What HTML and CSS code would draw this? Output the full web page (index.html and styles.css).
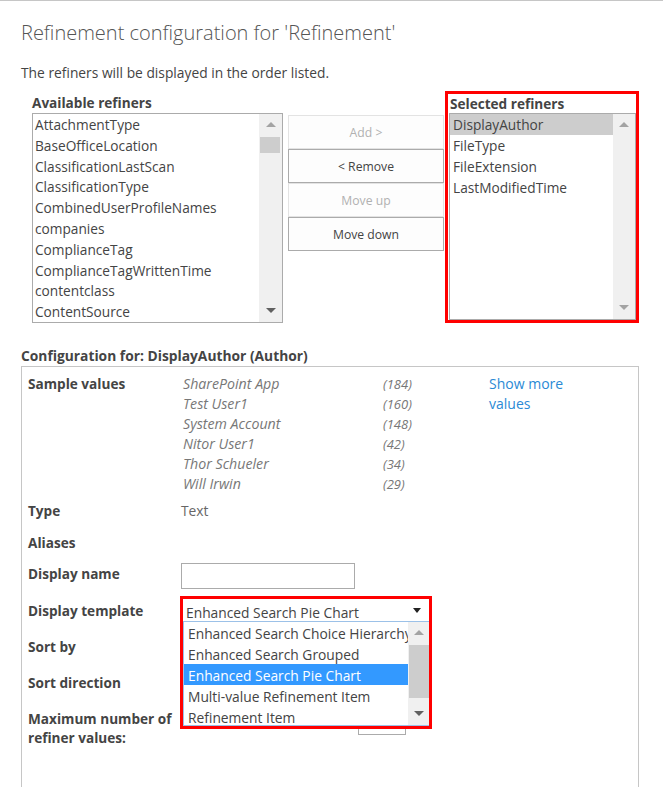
FILE: index.html
```html
<!DOCTYPE html>
<html lang="en">

<head>
    <meta charset="UTF-8">
    <title>Refinement configuration</title>
    <link rel="stylesheet" href="styles.css">
</head>
<body>
    <div class="page">
        <h1 class="title">Refinement configuration for 'Refinement'</h1>
        <p class="intro">The refiners will be displayed in the order listed.</p>

        <div class="refiners">
            <div class="available">
                <div class="caption">Available refiners</div>
                <div class="listbox avail-box">
                    <ul class="items">
                        <li>AttachmentType</li>
                        <li>BaseOfficeLocation</li>
                        <li>ClassificationLastScan</li>
                        <li>ClassificationType</li>
                        <li>CombinedUserProfileNames</li>
                        <li>companies</li>
                        <li>ComplianceTag</li>
                        <li>ComplianceTagWrittenTime</li>
                        <li>contentclass</li>
                        <li>ContentSource</li>
                    </ul>
                    <div class="vscroll">
                        <span class="arrow up off"></span>
                        <span class="thumb small"></span>
                        <span class="track"></span>
                        <span class="arrow down"></span>
                    </div>
                </div>
            </div>

            <div class="buttons">
                <button class="btn" disabled>Add &gt;</button>
                <button class="btn">&lt; Remove</button>
                <button class="btn" disabled>Move up</button>
                <button class="btn">Move down</button>
            </div>

            <div class="selected">
                <div class="caption">Selected refiners</div>
                <div class="listbox sel-box">
                    <ul class="items">
                        <li class="picked">DisplayAuthor</li>
                        <li>FileType</li>
                        <li>FileExtension</li>
                        <li>LastModifiedTime</li>
                    </ul>
                    <div class="vscroll">
                        <span class="arrow up off"></span>
                        <span class="track"></span>
                        <span class="arrow down off"></span>
                    </div>
                </div>
            </div>
        </div>

        <div class="config-title">Configuration for: DisplayAuthor (Author)</div>
        <div class="config">
            <div class="row samples-row">
                <div class="label">Sample values</div>
                <div class="samples">
                    <span class="name">SharePoint App</span><span class="count">(184)</span>
                    <span class="name">Test User1</span><span class="count">(160)</span>
                    <span class="name">System Account</span><span class="count">(148)</span>
                    <span class="name">Nitor User1</span><span class="count">(42)</span>
                    <span class="name">Thor Schueler</span><span class="count">(34)</span>
                    <span class="name">Will Irwin</span><span class="count">(29)</span>
                </div>
                <a class="more" href="javascript:;">Show more<br>values</a>
            </div>
            <div class="row type-row">
                <div class="label">Type</div>
                <div class="value">Text</div>
            </div>
            <div class="row aliases-row">
                <div class="label">Aliases</div>
            </div>
            <div class="row name-row">
                <div class="label">Display name</div>
                <input class="textbox" type="text">
            </div>
            <div class="row template-row">
                <div class="label">Display template</div>
                <div class="value template-cell">
                    <div class="dropdown">
                        <div class="dd-head">
                            <span>Enhanced Search Pie Chart</span>
                            <span class="dd-caret"></span>
                        </div>
                        <div class="dd-list">
                            <ul class="dd-items">
                                <li>Enhanced Search Choice Hierarchy</li>
                                <li>Enhanced Search Grouped</li>
                                <li class="hot">Enhanced Search Pie Chart</li>
                                <li>Multi-value Refinement Item</li>
                                <li>Refinement Item</li>
                            </ul>
                            <div class="vscroll dd-scroll">
                                <span class="arrow up off"></span>
                                <span class="thumb tall"></span>
                                <span class="track"></span>
                                <span class="arrow down"></span>
                            </div>
                        </div>
                    </div>
                </div>
            </div>
            <div class="row sort-row">
                <div class="label">Sort by</div>
            </div>
            <div class="row direction-row">
                <div class="label">Sort direction</div>
            </div>
            <div class="row max-row">
                <div class="label">Maximum number of<br>refiner values:</div>
                <input class="textbox max-box" type="text">
            </div>
        </div>
    </div>
</body>

</html>
```

FILE: styles.css
```css
*{
	margin: 0;
	padding: 0;
	box-sizing: border-box;
}

body{
	font-family: "Open Sans", "Liberation Sans", sans-serif;
	color: #444;
	background-color: #fff;
	border-top: 1px solid #c6c6c6;
}

.page{
	width: 663px;
	padding-left: 21px;
}

.title{
	font-size: 20px;
	font-weight: 300;
	color: #555;
	line-height: 28px;
	margin-top: 18px;
}

.intro{
	font-size: 13.8px;
	line-height: 18px;
	margin-top: 17px;
}

/* refiner pickers */
.refiners{
	display: flex;
	align-items: flex-start;
	margin-top: 9px;
	height: 232px;
}

.caption{
	font-size: 13.6px;
	font-weight: 700;
	line-height: 20px;
}

.available{
	margin-left: 11px;
	padding-top: 2px;
	width: 251px;
}

.listbox{
	display: flex;
	border: 1px solid #ababab;
	background-color: #fff;
}

.avail-box{
	height: 210px;
}

.items{
	list-style: none;
	flex: 1;
	font-size: 13.7px;
	line-height: 21px;
	color: #444;
	overflow: hidden;
	white-space: nowrap;
}

.items li{
	padding-left: 2px;
	height: 20.8px;
}

.sel-box .items li{
	height: 21px;
	padding-left: 3px;
}

.items li.picked{
	background-color: #cdcdcd;
}

.vscroll{
	display: flex;
	flex-direction: column;
	width: 23px;
	background-color: #f0f0f0;
}

.track{
	flex: 1;
}

.arrow{
	position: relative;
	height: 22px;
}

.arrow::after{
	content: "";
	position: absolute;
	left: 50%;
	top: 50%;
	margin-left: -5px;
	margin-top: -3px;
	border-left: 5px solid transparent;
	border-right: 5px solid transparent;
}

.arrow.up::after{
	border-bottom: 5px solid #606060;
}

.arrow.down::after{
	border-top: 5px solid #606060;
}

.arrow.up.off::after{
	border-bottom-color: #a3a3a3;
}

.arrow.down.off::after{
	border-top-color: #a3a3a3;
}

.thumb{
	margin: 1px 2px 0 1px;
	background-color: #cdcdcd;
}

.thumb.small{
	height: 16px;
}

.buttons{
	display: flex;
	flex-direction: column;
	margin-left: 5px;
	margin-top: 24px;
	width: 156px;
}

.btn{
	height: 34px;
	font-family: inherit;
	font-size: 12.2px;
	color: #444;
	background-color: #fdfdfd;
	border: 1px solid #ababab;
}

.btn[disabled]{
	color: #b1b1b1;
	border-color: #e3e3e3;
}

.selected{
	margin-left: 1px;
	width: 194px;
	height: 232px;
	border: 3px solid #f00;
	padding-left: 1px;
}

.selected .caption{
	line-height: 19px;
	padding-left: 1px;
}

.sel-box{
	width: 187px;
	height: 207px;
}

.sel-box .vscroll{
	width: 22px;
}

/* configuration of the chosen refiner */
.config-title{
	font-size: 13.8px;
	font-weight: 700;
	line-height: 20px;
	margin-top: 23px;
}

.config{
	width: 618px;
	height: 421px;
	border: 1px solid #c6c6c6;
	border-bottom: none;
	padding: 7px 0 0 6px;
}

.row{
	display: flex;
	align-items: flex-start;
	line-height: 20px;
	font-size: 13.8px;
}

.label{
	width: 153px;
	flex-shrink: 0;
	font-weight: 700;
	font-size: 13.6px;
	color: #444;
}

.samples{
	display: grid;
	grid-template-columns: 200px 106px;
	padding-left: 2px;
	color: #777;
	font-style: italic;
}

.samples .name{
	font-size: 14.2px;
}

.samples .count{
	font-size: 13px;
}

.more{
	color: #2a8ad5;
	text-decoration: none;
	font-size: 14px;
}

.value{
	color: #666;
}

.type-row{
	margin-top: 7px;
}

.aliases-row{
	margin-top: 12px;
}

.name-row{
	margin-top: 11px;
}

.textbox{
	height: 26px;
	width: 174px;
	margin-top: -1px;
	border: 1px solid #ababab;
	background-color: #fff;
}

.template-row{
	margin-top: 12px;
}

.template-cell{
	position: relative;
	height: 20px;
	flex: 1;
}

/* open display template select */
.dropdown{
	position: absolute;
	left: -1px;
	top: -5px;
	width: 252px;
	height: 133px;
	border: 3px solid #f00;
	background-color: #fff;
	z-index: 2;
	font-size: 13.8px;
	color: #444;
}

.dd-head{
	position: relative;
	height: 22px;
	line-height: 22px;
	padding: 3px 0 0 3px;
	overflow: hidden;
}

.dd-caret{
	position: absolute;
	right: 8px;
	top: 9px;
	border-left: 4px solid transparent;
	border-right: 4px solid transparent;
	border-top: 5px solid #222;
}

.dd-list{
	display: flex;
	height: 105px;
	border-top: 1px solid #9cc1e8;
	border-bottom: 1px solid #9cc1e8;
	border-left: 1px solid #9cc1e8;
}

.dd-items{
	list-style: none;
	flex: 1;
	overflow: hidden;
	white-space: nowrap;
}

.dd-items li{
	height: 21px;
	line-height: 23px;
	padding-left: 4px;
	overflow: hidden;
}

.dd-items li.hot{
	background-color: #3399ff;
	color: #fff;
}

.dd-scroll{
	width: 21px;
}

.thumb.tall{
	height: 53px;
	margin: 1px 0 0 1px;
}

.sort-row,
.direction-row{
	margin-top: 16px;
}

.max-row{
	margin-top: 16px;
	line-height: 19px;
}

.max-box{
	width: 48px;
	margin-top: 0;
	margin-left: 177px;
}
```
